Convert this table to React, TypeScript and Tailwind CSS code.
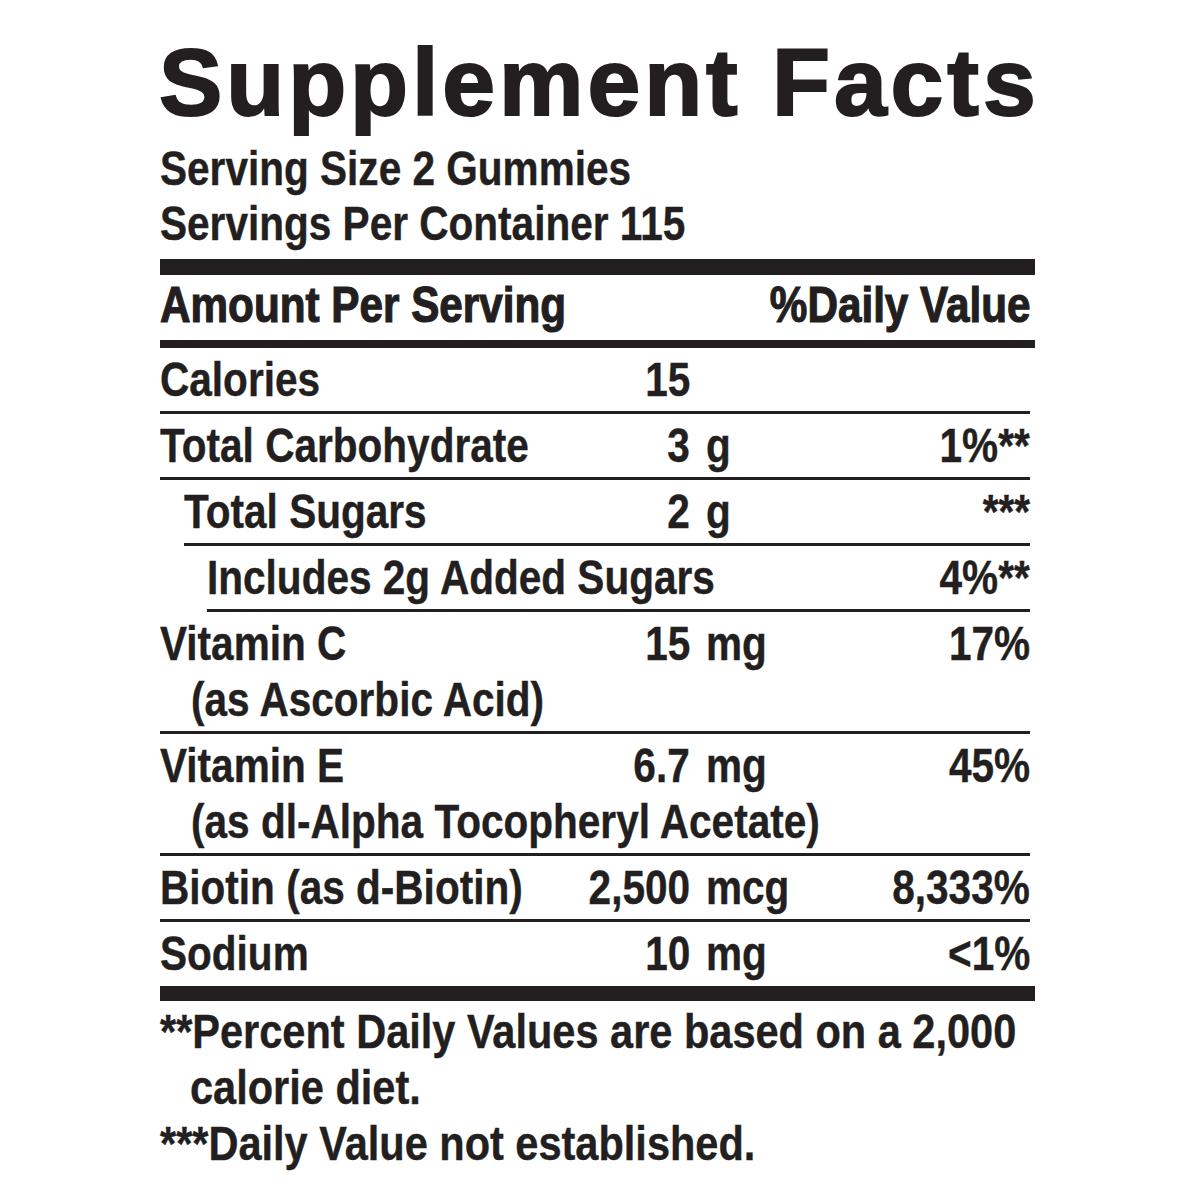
// Condensed look: Liberation Sans Bold squeezed horizontally around its anchor side
const L = 'inline-block whitespace-nowrap origin-left scale-x-[0.845]';
const R = 'inline-block whitespace-nowrap origin-right scale-x-[0.845]';
const F = 'inline-block whitespace-nowrap origin-left scale-x-[0.865]';

type Row = {
  label: string;
  sub?: string;
  num?: string;
  unit?: string;
  dv?: string;
  indent?: string;
  last?: boolean;
};

const rows: Row[] = [
  { label: 'Calories', num: '15' },
  { label: 'Total Carbohydrate', num: '3', unit: 'g', dv: '1%**' },
  { label: 'Total Sugars', num: '2', unit: 'g', dv: '***', indent: 'ml-[24px]' },
  { label: 'Includes 2g Added Sugars', dv: '4%**', indent: 'ml-[47px]' },
  { label: 'Vitamin C', sub: '(as Ascorbic Acid)', num: '15', unit: 'mg', dv: '17%' },
  { label: 'Vitamin E', sub: '(as dl-Alpha Tocopheryl Acetate)', num: '6.7', unit: 'mg', dv: '45%' },
  { label: 'Biotin (as d-Biotin)', num: '2,500', unit: 'mcg', dv: '8,333%' },
  { label: 'Sodium', num: '10', unit: 'mg', dv: '<1%', last: true },
];

const FactRow = ({ row }: { row: Row }) => {
  const hasAmount = row.num !== undefined;
  return (
    <div
      className={`pt-[4px] ${row.last ? 'pb-[4px]' : 'pb-[3px] border-b-[3px] border-[#231f20]'} ${row.indent ?? ''}`}
    >
      <div className="flex items-baseline">
        <div className="flex-1 min-w-0">
          <span className={L}>{row.label}</span>
        </div>
        {hasAmount && (
          <>
            <div className="w-[150px] text-right">
              <span className={R}>{row.num}</span>
            </div>
            <div className="w-[140px] pl-[16px]">
              <span className={L}>{row.unit}</span>
            </div>
          </>
        )}
        <div className="w-[200px] text-right">
          <span className={R}>{row.dv}</span>
        </div>
      </div>
      {row.sub && (
        <div className="pl-[31px]">
          <span className={L}>{row.sub}</span>
        </div>
      )}
    </div>
  );
};

export default function App() {
  return (
    <div className="min-h-screen bg-white text-[#231f20] font-['Liberation_Sans',Arial,sans-serif] font-bold">
      <div className="w-[875px] ml-[160px] pt-[35px]">
        {/* Title */}
        <h1 className="text-[95px] leading-[95px] tracking-[3.9px] -ml-[1px] whitespace-nowrap [-webkit-text-stroke:2px_#231f20]">
          Supplement Facts
        </h1>

        <div className="text-[48px] [-webkit-text-stroke:0.4px_#231f20]">
          <div className="mt-[11px] leading-[55px]">
            <div>
              <span className={L}>Serving Size 2 Gummies</span>
            </div>
            <div>
              <span className={L}>Servings Per Container 115</span>
            </div>
          </div>

          <div className="mt-[8px] h-[16px] bg-[#231f20]" />

          {/* Header row */}
          <div className="pt-[2px] pb-[7px] leading-[56px] flex items-baseline text-[50px] [-webkit-text-stroke:1.2px_#231f20]">
            <div className="flex-1 min-w-0">
              <span className={L}>Amount Per Serving</span>
            </div>
            <div className="pr-[5px]">
              <span className={R}>%Daily Value</span>
            </div>
          </div>
          <div className="h-[8px] bg-[#231f20]" />

          <div className="leading-[56px] pr-[5px]">
            {rows.map((r) => (
              <FactRow key={r.label} row={r} />
            ))}
          </div>

          <div className="h-[15px] bg-[#231f20]" />

          {/* Footnotes */}
          <div className="mt-[3px] leading-[56px]">
            <div>
              <span className={F}>**Percent Daily Values are based on a 2,000</span>
            </div>
            <div className="pl-[30px]">
              <span className={F}>calorie diet.</span>
            </div>
            <div>
              <span className={F}>***Daily Value not established.</span>
            </div>
          </div>
        </div>
      </div>
    </div>
  );
}
